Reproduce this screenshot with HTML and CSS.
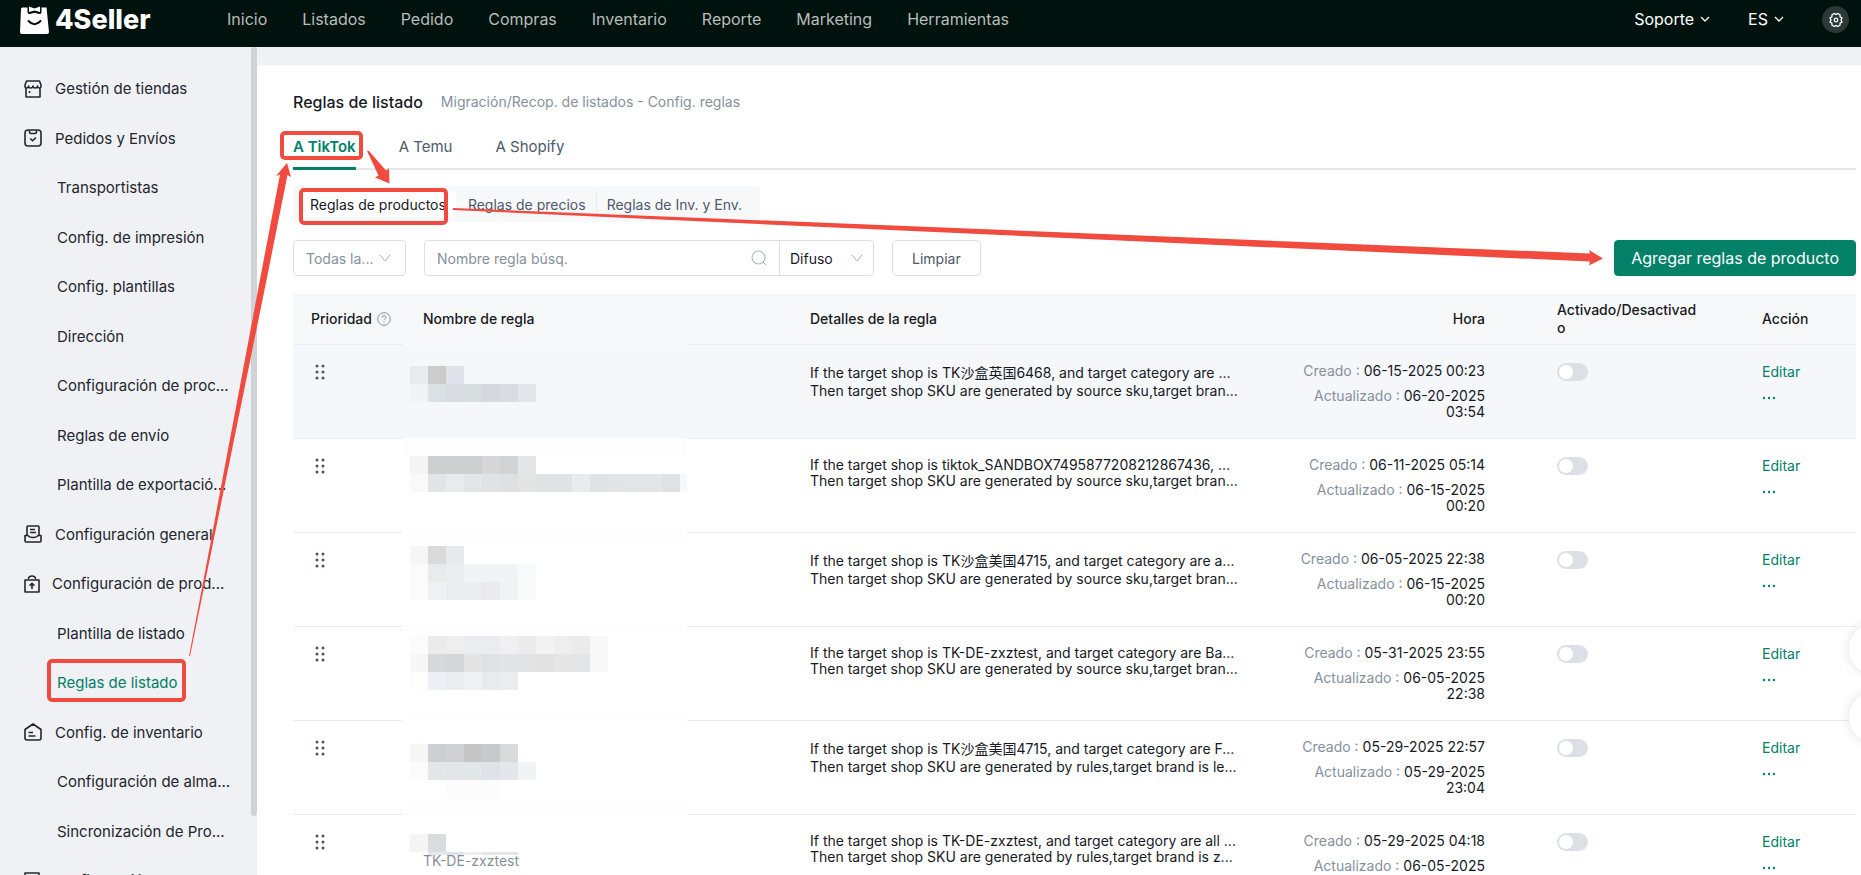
FILE: index.html
```
<!DOCTYPE html>
<html lang="es">
<head>
    <meta charset="UTF-8">
    <title>4Seller - Reglas de listado</title>
    <link rel="stylesheet" href="styles.css">
</head>
<body>
    <header class="header">
        <a class="logo" href="#">
            <svg width="29" height="28" viewBox="0 0 29 28">
                <path d="M2.500 1.500H8L9 3H20L21 1.500H26.500L29 26Q29 28 27 28H2Q0 28 0 26L1 3Q1 1.500 2.500 1.500Z" fill="#fff"/>
                <path d="M7.500 0V6.500Q8 8.500 10 8L14.500 6.800L19 8Q21 8.500 21.500 6.500V0Z" fill="#00120d"/>
                <path d="M9 0.500L14.500 2.500L20 0.500V6L14.500 4.500L9 6Z" fill="#fff"/>
                <path d="M8.500 15Q14.500 21.500 20.500 15" fill="none" stroke="#00120d" stroke-width="2" stroke-linecap="round"/>
            </svg>
            <span>4Seller</span>
        </a>
        <nav class="nav">
            <a href="#">Inicio</a>
            <a href="#">Listados</a>
            <a href="#">Pedido</a>
            <a href="#">Compras</a>
            <a href="#">Inventario</a>
            <a href="#">Reporte</a>
            <a href="#">Marketing</a>
            <a href="#">Herramientas</a>
        </nav>
        <div class="tools">
            <button class="tool">Soporte <svg width="10" height="10" viewBox="0 0 10 10"><path d="M1 3L5 7L9 3"/></svg></button>
            <button class="tool">ES <svg width="10" height="10" viewBox="0 0 10 10"><path d="M1 3L5 7L9 3"/></svg></button>
            <button class="gear" aria-label="Ajustes">
                <svg width="16" height="16" viewBox="0 0 16 16"><path d="M6.300 1.500L8 2.600L9.700 1.500L12 2.800L12.100 4.900L14 6L13 8L14 10L12.100 11.100L12 13.200L9.700 14.500L8 13.400L6.300 14.500L4 13.200L3.900 11.100L2 10L3 8L2 6L3.900 4.900L4 2.800Z"/><circle cx="8" cy="8" r="1.800"/></svg>
            </button>
        </div>
    </header>

    <div class="layout">
        <aside class="sidebar">
            <ul class="menu">
                <li><a href="#">
                    <svg width="18" height="18" viewBox="0 0 18 18"><path d="M2.500 1H15.500L17 5V6.500Q17 8 15.500 8Q13.500 8 13.500 6Q13.500 8 11.300 8Q9 8 9 6Q9 8 6.700 8Q4.500 8 4.500 6Q4.500 8 2.500 8Q1 8 1 6.500V5ZM2 8V17H16V8M5.500 11V13"/></svg>
                    <span>Gestión de tiendas</span></a></li>
                <li><a href="#">
                    <svg width="18" height="18" viewBox="0 0 18 18"><rect x="1" y="1" width="16" height="16" rx="3"/><path d="M5.500 1.500V3Q5.500 4.500 7 4.500H11Q12.500 4.500 12.500 3V1.500M6.300 9.500L8.600 11.800L12 8.500"/></svg>
                    <span>Pedidos y Envíos</span></a></li>
                <li class="sub"><a href="#"><span>Transportistas</span></a></li>
                <li class="sub"><a href="#"><span>Config. de impresión</span></a></li>
                <li class="sub"><a href="#"><span>Config. plantillas</span></a></li>
                <li class="sub"><a href="#"><span>Dirección</span></a></li>
                <li class="sub"><a href="#"><span>Configuración de proc...</span></a></li>
                <li class="sub"><a href="#"><span>Reglas de envío</span></a></li>
                <li class="sub"><a href="#"><span>Plantilla de exportació...</span></a></li>
                <li><a href="#">
                    <svg width="18" height="18" viewBox="0 0 18 18"><path d="M3 10V2Q3 1 4 1H14Q15 1 15 2V10M6 4.500H11M6 7.500H12M1 10.500H4Q5 12.500 9 12.500Q13 12.500 14 10.500H17V16Q17 17 16 17H2Q1 17 1 16Z"/></svg>
                    <span>Configuración general</span></a></li>
                <li><a class="tight" href="#">
                    <svg width="16" height="18" viewBox="0 0 16 18"><path d="M1 5H15V17H1ZM4.500 4Q4.500 1 8 1Q11.500 1 11.500 4M8 14V8.500M5.500 10.800L8 8.300L10.500 10.800"/></svg>
                    <span>Configuración de prod...</span></a></li>
                <li class="sub"><a href="#"><span>Plantilla de listado</span></a></li>
                <li class="sub current"><a href="#"><span>Reglas de listado</span></a></li>
                <li><a href="#">
                    <svg width="18" height="18" viewBox="0 0 18 18"><path d="M1 6.500L9 1L17 6.500V15Q17 17 15 17H3Q1 17 1 15ZM4.500 9.500H9M4.500 13H11.500"/></svg>
                    <span>Config. de inventario</span></a></li>
                <li class="sub"><a href="#"><span>Configuración de alma...</span></a></li>
                <li class="sub"><a href="#"><span>Sincronización de Pro...</span></a></li>
                <li><a class="tight" href="#">
                    <svg width="16" height="18" viewBox="0 0 16 18"><path d="M1 1H15V17H1ZM4 5H12"/></svg>
                    <span>Configuración de...</span></a></li>
            </ul>
            <div class="scrollbar"></div>
        </aside>

        <main class="main">
            <div class="title-row">
                <h1>Reglas de listado</h1>
                <span class="crumb">Migración/Recop. de listados - Config. reglas</span>
            </div>

            <div class="tabs">
                <a class="tab active" href="#">A TikTok</a>
                <a class="tab" href="#">A Temu</a>
                <a class="tab" href="#">A Shopify</a>
            </div>

            <div class="segment">
                <button class="seg on">Reglas de productos</button>
                <button class="seg">Reglas de precios</button>
                <button class="seg last">Reglas de Inv. y Env.</button>
            </div>

            <div class="toolbar">
                <div class="select shops">
                    <select aria-label="Tiendas"><option>Todas la...</option></select>
                    <svg width="12" height="12" viewBox="0 0 12 12"><path d="M1 3L6 9L11 3"/></svg>
                </div>
                <div class="search">
                    <input type="text" placeholder="Nombre regla búsq." aria-label="Nombre regla búsq.">
                    <svg width="16" height="16" viewBox="0 0 16 16"><circle cx="7.500" cy="7.500" r="6.500"/><path d="M12 12L15 15"/></svg>
                    <div class="select mode">
                        <select aria-label="Modo"><option>Difuso</option></select>
                        <svg width="12" height="12" viewBox="0 0 12 12"><path d="M1 3L6 9L11 3"/></svg>
                    </div>
                </div>
                <button class="btn">Limpiar</button>
                <button class="btn primary">Agregar reglas de producto</button>
            </div>

            <table class="rules">
                <colgroup>
                    <col class="c-prio"><col class="c-name"><col><col class="c-time"><col class="c-switch"><col class="c-action">
                </colgroup>
                <thead>
                    <tr>
                        <th><span class="prio">Prioridad
                            <svg width="14" height="14" viewBox="0 0 14 14"><circle cx="7" cy="7" r="6.300"/><path d="M5 5.500Q5 3.700 7 3.700Q9 3.700 9 5.300Q9 6.300 7.800 6.900Q7 7.300 7 8.300M7 9.600V10.700"/></svg></span></th>
                        <th>Nombre de regla</th>
                        <th>Detalles de la regla</th>
                        <th class="time">Hora</th>
                        <th class="switch-col">Activado/Desactivado</th>
                        <th>Acción</th>
                    </tr>
                </thead>
                <tbody>
                    <tr class="hover">
                        <td><svg class="grip" viewBox="0 0 10 16"><use href="#grip"/></svg></td>
                        <td></td>
                        <td class="details cjk"><p>If the target shop is TK沙盒英国6468, and target category are ...</p><p>Then target shop SKU are generated by source sku,target bran...</p></td>
                        <td class="time"><p><span>Creado :</span> 06-15-2025 00:23</p><p><span>Actualizado :</span> 06-20-2025 03:54</p></td>
                        <td><input class="switch" type="checkbox" aria-label="Activar regla"></td>
                        <td class="action"><a href="#">Editar</a><button aria-label="Más"><svg width="14" height="4" viewBox="0 0 14 4"><use href="#more"/></svg></button></td>
                    </tr>
                    <tr>
                        <td><svg class="grip" viewBox="0 0 10 16"><use href="#grip"/></svg></td>
                        <td></td>
                        <td class="details"><p>If the target shop is tiktok_SANDBOX7495877208212867436, ...</p><p>Then target shop SKU are generated by source sku,target bran...</p></td>
                        <td class="time"><p><span>Creado :</span> 06-11-2025 05:14</p><p><span>Actualizado :</span> 06-15-2025 00:20</p></td>
                        <td><input class="switch" type="checkbox" aria-label="Activar regla"></td>
                        <td class="action"><a href="#">Editar</a><button aria-label="Más"><svg width="14" height="4" viewBox="0 0 14 4"><use href="#more"/></svg></button></td>
                    </tr>
                    <tr>
                        <td><svg class="grip" viewBox="0 0 10 16"><use href="#grip"/></svg></td>
                        <td></td>
                        <td class="details cjk"><p>If the target shop is TK沙盒美国4715, and target category are a...</p><p>Then target shop SKU are generated by source sku,target bran...</p></td>
                        <td class="time"><p><span>Creado :</span> 06-05-2025 22:38</p><p><span>Actualizado :</span> 06-15-2025 00:20</p></td>
                        <td><input class="switch" type="checkbox" aria-label="Activar regla"></td>
                        <td class="action"><a href="#">Editar</a><button aria-label="Más"><svg width="14" height="4" viewBox="0 0 14 4"><use href="#more"/></svg></button></td>
                    </tr>
                    <tr>
                        <td><svg class="grip" viewBox="0 0 10 16"><use href="#grip"/></svg></td>
                        <td></td>
                        <td class="details"><p>If the target shop is TK-DE-zxztest, and target category are Ba...</p><p>Then target shop SKU are generated by source sku,target bran...</p></td>
                        <td class="time"><p><span>Creado :</span> 05-31-2025 23:55</p><p><span>Actualizado :</span> 06-05-2025 22:38</p></td>
                        <td><input class="switch" type="checkbox" aria-label="Activar regla"></td>
                        <td class="action"><a href="#">Editar</a><button aria-label="Más"><svg width="14" height="4" viewBox="0 0 14 4"><use href="#more"/></svg></button></td>
                    </tr>
                    <tr>
                        <td><svg class="grip" viewBox="0 0 10 16"><use href="#grip"/></svg></td>
                        <td></td>
                        <td class="details cjk"><p>If the target shop is TK沙盒美国4715, and target category are F...</p><p>Then target shop SKU are generated by rules,target brand is le...</p></td>
                        <td class="time"><p><span>Creado :</span> 05-29-2025 22:57</p><p><span>Actualizado :</span> 05-29-2025 23:04</p></td>
                        <td><input class="switch" type="checkbox" aria-label="Activar regla"></td>
                        <td class="action"><a href="#">Editar</a><button aria-label="Más"><svg width="14" height="4" viewBox="0 0 14 4"><use href="#more"/></svg></button></td>
                    </tr>
                    <tr>
                        <td><svg class="grip" viewBox="0 0 10 16"><use href="#grip"/></svg></td>
                        <td class="name">TK-DE-zxztest</td>
                        <td class="details"><p>If the target shop is TK-DE-zxztest, and target category are all ...</p><p>Then target shop SKU are generated by rules,target brand is z...</p></td>
                        <td class="time"><p><span>Creado :</span> 05-29-2025 04:18</p><p><span>Actualizado :</span> 06-05-2025</p></td>
                        <td><input class="switch" type="checkbox" aria-label="Activar regla"></td>
                        <td class="action"><a href="#">Editar</a><button aria-label="Más"><svg width="14" height="4" viewBox="0 0 14 4"><use href="#more"/></svg></button></td>
                    </tr>
                </tbody>
            </table>
        </main>
    </div>

    <div class="floats">
        <div class="float"></div>
        <div class="float"></div>
    </div>

    <!-- shared shapes -->
    <svg class="defs" width="0" height="0">
        <g id="grip" fill="#4a5568"><circle cx="2" cy="2" r="1.500"/><circle cx="8" cy="2" r="1.500"/><circle cx="2" cy="8" r="1.500"/><circle cx="8" cy="8" r="1.500"/><circle cx="2" cy="14" r="1.500"/><circle cx="8" cy="14" r="1.500"/></g>
        <g id="more" fill="#028068"><circle cx="2" cy="2" r="1.200"/><circle cx="7" cy="2" r="1.200"/><circle cx="12" cy="2" r="1.200"/></g>
    </svg>

    <!-- mosaic over the rule names -->
    <svg class="mosaic" width="284" height="515" viewBox="403 340 284 515" shape-rendering="crispEdges">
        <path fill="#f6f8fa" d="M403 340h284v8h-284z"/>
        <path fill="#f5f7fb" d="M403 348h284v90h-284z"/>
        <path fill="#fdfdfd" d="M403 438h284v18h-284z"/>
        <path fill="#fefefe" d="M403 526h284v3h-284zM403 529h284v17h-284zM403 619h284v17h-284zM403 708h284v18h-284zM403 798h284v18h-284z"/>

        <path fill="#e9eaee" d="M410 366h18v18h-18z"/><path fill="#cccccd" d="M428 366h18v18h-18z"/><path fill="#dfe2ea" d="M446 366h18v18h-18z"/>
        <path fill="#f1f3f6" d="M410 384h18v18h-18z"/><path fill="#dae1e4" d="M428 384h18v18h-18z"/><path fill="#d8dbe0" d="M446 384h18v18h-18z"/><path fill="#d7dee0" d="M464 384h18v18h-18z"/><path fill="#d4d8e1" d="M482 384h18v18h-18z"/><path fill="#d9dce0" d="M500 384h18v18h-18z"/><path fill="#e2e5e9" d="M518 384h18v18h-18z"/>

        <path fill="#f4f4f2" d="M410 456h18v18h-18z"/><path fill="#cecfd1" d="M428 456h54v18h-54z"/><path fill="#d7d7d9" d="M482 456h18v18h-18z"/><path fill="#d2d3d4" d="M500 456h18v18h-18z"/><path fill="#e5e6e8" d="M518 456h18v18h-18z"/>
        <path fill="#f9f9f9" d="M410 474h18v18h-18z"/><path fill="#e3e4e7" d="M428 474h18v18h-18z"/><path fill="#e9eaed" d="M446 474h18v18h-18z"/><path fill="#e4e5e8" d="M464 474h18v18h-18z"/><path fill="#dfe3e5" d="M482 474h18v18h-18z"/><path fill="#dde1e3" d="M500 474h18v18h-18z"/><path fill="#e4e4e5" d="M518 474h18v18h-18z"/><path fill="#e0e2e5" d="M536 474h36v18h-36z"/><path fill="#eaebed" d="M572 474h18v18h-18z"/><path fill="#e0e2e6" d="M590 474h18v18h-18z"/><path fill="#e1e5e8" d="M608 474h18v18h-18z"/><path fill="#e4e5e7" d="M626 474h36v18h-36z"/><path fill="#dde2e5" d="M662 474h18v18h-18z"/><path fill="#f7f8f9" d="M680 474h7v18h-7z"/>

        <path fill="#f6f6f6" d="M410 546h18v18h-18z"/><path fill="#dadada" d="M428 546h18v18h-18z"/><path fill="#e8e9ea" d="M446 546h18v18h-18z"/>
        <path fill="#fbfbfb" d="M410 564h18v36h-18z"/><path fill="#e9eaec" d="M428 564h18v18h-18z"/><path fill="#ecedef" d="M446 564h18v18h-18z"/><path fill="#f2f3f5" d="M464 564h54v18h-54z"/><path fill="#f9fbfa" d="M518 564h18v36h-18z"/>
        <path fill="#eff0f3" d="M428 582h18v18h-18z"/><path fill="#ecedef" d="M446 582h36v18h-36z"/><path fill="#ebebed" d="M482 582h18v18h-18z"/><path fill="#f0f2f4" d="M500 582h18v18h-18z"/>

        <path fill="#fbfbfb" d="M410 636h18v18h-18z"/><path fill="#ebebeb" d="M428 636h18v18h-18z"/><path fill="#eeeeee" d="M446 636h18v18h-18z"/><path fill="#ebecee" d="M464 636h36v18h-36z"/><path fill="#f0f0f0" d="M500 636h18v18h-18z"/><path fill="#ebebeb" d="M518 636h18v18h-18z"/><path fill="#f3f3f3" d="M536 636h18v18h-18z"/><path fill="#eeeeee" d="M554 636h18v18h-18z"/><path fill="#ebebeb" d="M572 636h18v18h-18z"/><path fill="#f8f8f8" d="M590 636h18v36h-18z"/>
        <path fill="#f7f7f7" d="M410 654h18v18h-18z"/><path fill="#d8d9db" d="M428 654h18v18h-18z"/><path fill="#d5d6d7" d="M446 654h18v18h-18z"/><path fill="#e4e4e4" d="M464 654h18v18h-18z"/><path fill="#dfe1e3" d="M482 654h18v18h-18z"/><path fill="#e3e4e7" d="M500 654h36v18h-36z"/><path fill="#e1e1e1" d="M536 654h18v18h-18z"/><path fill="#e6e6e6" d="M554 654h18v18h-18z"/><path fill="#e4e5e7" d="M572 654h18v18h-18z"/>
        <path fill="#fdfdfb" d="M410 672h18v18h-18z"/><path fill="#ebf0f4" d="M428 672h18v18h-18z"/><path fill="#ebecee" d="M446 672h18v18h-18z"/><path fill="#eff0f2" d="M464 672h18v18h-18z"/><path fill="#e9eaef" d="M482 672h18v18h-18z"/><path fill="#ebecee" d="M500 672h18v18h-18z"/>

        <path fill="#f6f6f5" d="M410 744h18v18h-18z"/><path fill="#cbcfd2" d="M428 744h18v18h-18z"/><path fill="#d0d1d2" d="M446 744h18v18h-18z"/><path fill="#c6c6c7" d="M464 744h18v18h-18z"/><path fill="#c6cacd" d="M482 744h18v18h-18z"/><path fill="#d9dadc" d="M500 744h18v18h-18z"/>
        <path fill="#fcfbf9" d="M410 762h18v18h-18z"/><path fill="#e2e7ea" d="M428 762h18v18h-18z"/><path fill="#e4e5e7" d="M446 762h18v18h-18z"/><path fill="#e1e6e9" d="M464 762h18v18h-18z"/><path fill="#e1e2e7" d="M482 762h18v18h-18z"/><path fill="#e5e6eb" d="M500 762h18v18h-18z"/><path fill="#f2f3f5" d="M518 762h18v18h-18z"/>
        <path fill="#fbfcfb" d="M446 780h54v18h-54z"/>

        <path fill="#f5f5f4" d="M410 834h18v18h-18z"/><path fill="#dbdcde" d="M428 834h18v18h-18z"/>
        <path fill="#e5e9ed" d="M428 852h18v3h-18z"/><path fill="#e0e3e8" d="M446 852h18v3h-18z"/><path fill="#eeeff0" d="M464 852h18v3h-18z"/><path fill="#e3e7eb" d="M482 852h36v3h-36z"/>
    </svg>

    <!-- red boxes and arrows -->
    <svg class="marks" width="1610" height="710" viewBox="0 0 1610 710">
        <g fill="none" stroke="#f04b3e" stroke-width="4">
            <rect x="282" y="133" width="79" height="25" rx="3"/>
            <rect x="301" y="190" width="145" height="33" rx="3"/>
            <rect x="49" y="661" width="135" height="39" rx="3"/>
        </g>
        <g fill="#f04b3e">
            <path d="M189 656L203.500 580L258 290L280 174.500L276 176L287 163L291 177L287.500 175L264.500 290L205.500 580L190 656Z"/>
            <path d="M367 151L369 151L386 170.500L389 168.500L389.500 183.500L375 177.500L378.500 175.500Z"/>
            <path d="M453 208L1240 239.500L1590 253.500L1589 250L1603 258.500L1589 265.500L1590 261.500L1240 246L453 210Z"/>
        </g>
    </svg>
</body>
</html>
```
FILE: styles.css
```
* { box-sizing: border-box; }
body { margin: 0; height: 100vh; overflow: hidden; display: flex; flex-direction: column; position: relative; font-family: Inter, "Noto Sans CJK SC", sans-serif; font-size: 14px; color: #171a1f; background: #f0f1f5; }
a { color: inherit; text-decoration: none; }
p, h1, ul { margin: 0; padding: 0; }
button, input, select { font: inherit; color: inherit; }
button { border: none; background: none; padding: 0; cursor: pointer; }

/* top bar */
.header { flex: none; height: 47px; padding: 0 12px 8px 20px; display: flex; align-items: center; background: #00120d; color: #fff; font-size: 16px; }
.logo { width: 207px; display: flex; align-items: center; gap: 6px; font-size: 27px; font-weight: 800; }
.nav { flex: 1; display: flex; gap: 35px; padding-bottom: 2px; color: #b8bdbb; }
.tools { display: flex; align-items: center; gap: 38px; }
.tool { display: flex; align-items: center; gap: 6px; padding-bottom: 2px; }
.tool svg, .gear svg { fill: none; stroke: #fff; stroke-width: 1.3; }
.gear { width: 27px; height: 27px; border-radius: 50%; background: #2b3936; display: flex; align-items: center; justify-content: center; }

.layout { flex: 1; min-height: 0; display: flex; }

/* left menu */
.sidebar { width: 257px; flex: none; display: flex; overflow: hidden; }
.menu { flex: 1; list-style: none; padding: 17px 0 0 24px; font-size: 15px; color: #23262d; }
.menu li { height: 49px; display: flex; align-items: center; white-space: nowrap; }
.menu li:nth-child(even) { height: 50px; }
.menu a { display: flex; align-items: center; gap: 13px; }
.menu a.tight { gap: 12px; }
.menu svg { fill: none; stroke: #23262d; stroke-width: 1.6; stroke-linejoin: round; }
.menu .sub { padding-left: 33px; }
.menu .current { color: #028068; }
.scrollbar { width: 6px; height: 769px; border-radius: 3px; background: #cfd3d6; }

/* content */
.main { flex: 1; min-width: 0; margin-top: 18px; padding: 23px 5px 0 36px; background: #fff; border-top-left-radius: 4px; overflow: hidden; }
.title-row { height: 27px; display: flex; align-items: center; gap: 18px; }
.title-row h1 { font-size: 16px; font-weight: 500; }
.crumb { color: #86909c; }

.tabs { height: 55px; display: flex; gap: 43px; border-bottom: 2px solid #e4e7ea; font-size: 15px; color: #4e5969; }
.tab { height: 55px; line-height: 63px; border-bottom: 3px solid transparent; }
.tab.active { color: #028068; font-weight: 600; border-color: #028068; }

.segment { width: max-content; margin-top: 16px; padding: 5px 8px 5px 7px; height: 36px; display: flex; background: #f7f8fa; border-radius: 4px; color: #4e5969; }
.seg { padding: 0 10px; border-right: 1px solid #e8eaee; }
.seg.on { background: #fff; border: none; border-radius: 4px; color: #171a1f; margin-right: 2px; }
.seg.last { border: none; }

.toolbar { margin-top: 18px; display: flex; align-items: center; }
.select { position: relative; }
.select select { appearance: none; width: 100%; height: 100%; padding: 0 12px; border: none; outline: none; background: none; }
.select svg { position: absolute; right: 14px; top: 50%; margin-top: -6px; pointer-events: none; }
.toolbar svg { fill: none; stroke: #a9afb8; stroke-width: 1; }
.shops { width: 113px; height: 36px; border: 1px solid #dcdfe6; border-radius: 4px; color: #86909c; }
.search { width: 450px; height: 36px; margin: 0 18px; display: flex; align-items: center; border: 1px solid #dcdfe6; border-radius: 4px; }
.search input { flex: 1; min-width: 0; border: none; outline: none; background: none; padding: 0 12px; }
.search input::placeholder { color: #86909c; opacity: 1; }
.search .mode { width: 94px; height: 34px; margin-left: 12px; border-left: 1px solid #dcdfe6; }
.mode select { padding: 0 10px; }
.mode svg { right: 10px; }
.btn { height: 36px; padding: 0 19px; border: 1px solid #dcdfe6; border-radius: 4px; color: #4e5969; }
.btn.primary { margin-left: auto; padding: 0 16px; background: #028068; border-color: #028068; color: #fff; font-size: 16px; }

/* rules table */
.rules { width: 100%; margin-top: 18px; border-collapse: separate; border-spacing: 0; table-layout: fixed; }
.c-prio, .c-action { width: 112px; }
.c-name { width: 387px; }
.c-time { width: 279px; }
.c-switch { width: 205px; }
.rules th { height: 51px; padding: 0 18px; background: #f7f8fa; border-bottom: 1px solid #e9ecf3; text-align: left; font-weight: 500; line-height: 18px; }
.rules td { height: 94px; padding: 18px 18px 0; border-bottom: 1px solid #e9ecf3; vertical-align: top; line-height: 16px; }
.rules .hover td { background: #f5f7fb; }
.prio { display: flex; align-items: center; gap: 5px; }
.prio svg { flex: none; fill: none; stroke: #86909c; }
.grip { display: block; width: 10px; height: 16px; margin: 1px 0 0 4px; }
.rules .name { padding-top: 38px; color: #86909c; }
.details { white-space: nowrap; }
.rules .cjk p:first-child { line-height: 20px; }
.rules .time { padding-left: 36px; padding-right: 54px; text-align: right; }
.time p + p { margin-top: 9px; }
.time span { color: #86909c; }
.rules .switch-col { padding-right: 45px; word-break: break-all; }
.switch { appearance: none; display: block; width: 31px; height: 18px; margin: 0; padding: 2px; border-radius: 9px; background: #dcdfe6; }
.switch::before { content: ""; display: block; width: 14px; height: 14px; border-radius: 50%; background: #fff; }
.action { color: #028068; }
.action a, .action button { display: block; line-height: 18px; }
.action button { height: 28px; }

/* over the page */
.floats { position: absolute; right: -40px; top: 623px; display: grid; gap: 16px; }
.float { width: 52px; height: 52px; border-radius: 50%; background: #fff; box-shadow: 0 0 12px rgba(0,0,0,0.12); }
.defs { position: absolute; }
.mosaic { position: absolute; left: 403px; top: 340px; pointer-events: none; }
.marks { position: absolute; left: 0; top: 0; pointer-events: none; }
```
